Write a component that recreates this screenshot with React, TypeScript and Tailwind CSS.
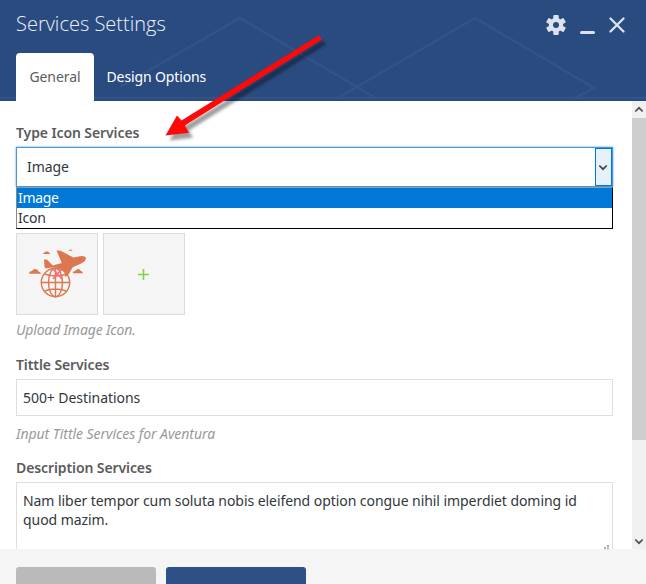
import React from "react";

function HeaderPattern() {
  return (
    <svg className="absolute inset-0" width="646" height="101" fill="none" stroke="#36578b" strokeWidth="2.5">
      <path d="M120 87 240 18 374 97M338 98 475 18 594 88 575 98M0 98H646" strokeOpacity=".7" />
    </svg>
  );
}

function Gear() {
  return (
    <svg width="20" height="20" viewBox="-10 -10 20 20">
      <g fill="#dbe2ee">
        {[0, 60, 120].map((a) => (
          <rect key={a} x="-2.7" y="-10" width="5.4" height="20" rx="1" transform={`rotate(${a})`} />
        ))}
        <circle r="7.2" />
      </g>
      <circle r="3" fill="#2a4b80" />
    </svg>
  );
}

function TravelIcon() {
  return (
    <svg width="80" height="80" viewBox="17 234 80 80">
      <g fill="#dc7850">
        <path d="M44 259.3l3.2.4 5.6 5.8 9-2.6-5.3-12.4 4.2.3 12.6 6.6 6.7-1.2q4.8-.6 6 1.6-.1 3.6-4.8 5.6l-8.5 3.8-4.5 7.8-3.2 2-.7-5.6q-3.5-4-9.8-4-4.5 0-8.7 1.2l-1.3-1.5z" />
        <path d="M29 273.8q0-2.5 3-2.8 2-3.5 5.5-1.2l1 1.6q2.4.4 2.4 2.4z" />
        <path d="M72.5 273.3q.4-2.4 3-2.5 1.8-3 4.5-1l.8 1.3q2.2.2 2.2 2.2z" />
        <path d="M43 254q.3-1.5 2-1.7 1.7-2 3.2-.2 1.6.3 1.8 1.9z" />
        <path d="M68.5 250.8q2-2.8 4.2 0z" />
      </g>
      <g fill="none" stroke="#dc7850" strokeWidth="1.4">
        <circle cx="55.5" cy="282.5" r="14.2" />
        <ellipse cx="55.5" cy="282.5" rx="7" ry="14.2" />
        <path d="M55.5 268v29M41 282.5h29M44.5 274q11 4 22 0M44.5 291q11-4 22 0" />
      </g>
      <path d="M53 269l9 10M62 269l-9 10" stroke="#ff6c79" strokeWidth="1.7" />
    </svg>
  );
}

function Chevron({ className }: { className: string }) {
  return (
    <svg className={className} width="10" height="7" viewBox="0 0 10 7" fill="none">
      <path d="M1.3 1.5 5 5.2 8.7 1.5" stroke="currentColor" strokeWidth="1.7" />
    </svg>
  );
}

function Arrow() {
  return (
    <svg className="absolute left-0 top-0 z-20 pointer-events-none" width="646" height="200">
      <defs>
        <filter id="soft" x="-10%" y="-10%" width="120%" height="130%">
          <feGaussianBlur stdDeviation="1.5" />
        </filter>
      </defs>
      <path d="M319 35.3 181.5 120.5 177 115.5 165.5 135.5 189 132.8 184.8 125.5 322 39.5Z" fill="#000" fillOpacity=".38" filter="url(#soft)" transform="translate(4 5)" />
      <path d="M319 35.3 181.5 120.5 177 115.5 165.5 135.5 189 132.8 184.8 125.5 322 39.5Z" fill="#fe0808" />
    </svg>
  );
}

export default function App() {
  return (
    <div className="relative flex h-[584px] w-[646px] flex-col overflow-hidden bg-white font-['Noto_Sans','Open_Sans',sans-serif] text-[14px] leading-[19px] tracking-[-0.06px] text-[#32373c]">
      <header className="relative flex h-[101px] shrink-0 flex-col justify-between bg-[#2a4b80]">
        <HeaderPattern />
        <div className="relative flex h-[48px] items-center justify-between pl-4 pr-[21px]">
          <h1 className="pb-0.5 font-['Open_Sans',sans-serif] text-[20px] font-light tracking-normal text-[#edf2fa]">Services Settings</h1>
          <div className="flex items-center pt-0.5">
            <Gear />
            <span className="ml-[14px] mt-[14px] h-[3px] w-[15px] rounded-sm bg-[#dbe2ee]" />
            <svg className="ml-[14px]" width="16" height="16" viewBox="0 0 16 16">
              <path d="M1.5 1.5l13 13M14.5 1.5l-13 13" stroke="#dbe2ee" strokeWidth="2.3" strokeLinecap="round" />
            </svg>
          </div>
        </div>
        <nav className="relative flex h-[48px] pl-4">
          <button className="w-[78px] rounded-t bg-white pb-0.5 text-[#5c5c5c]">General</button>
          <button className="ml-[12.5px] pb-0.5 tracking-[-0.12px] text-white">Design Options</button>
        </nav>
      </header>

      <div className="flex h-[448px] shrink-0 overflow-hidden">
        <main className="w-[632px] overflow-hidden pl-4 pr-[19px] pt-[22px]">
          <label className="block h-[19px] font-semibold tracking-[-0.1px] text-[#5b5b5b]">Type Icon Services</label>
          <div className="relative mt-[5px] h-[40px] border border-[#4c96d8] shadow-[0_0_2px_#5b9dd9]">
            <div className="flex h-full items-center justify-between pl-[10px]">
              <span className="pb-0.5">Image</span>
              <span className="flex h-[38px] w-[17px] items-center justify-center border border-[#0078d7] bg-[#e5f1fb] pr-px">
                <Chevron className="text-[#444]" />
              </span>
            </div>
            <div className="absolute -left-px top-[39px] z-10 h-[42px] w-[597px] border border-black border-l-[#888] border-t-[#999] bg-white">
              <div className="h-[20px] bg-[#0078d7] pl-px text-white tracking-[-0.3px]">Image</div>
              <div className="h-[20px] pl-px tracking-[-0.2px]">Icon</div>
            </div>
          </div>
          <div className="mt-[46px] flex gap-[5px]">
            <div className="h-[82px] w-[82px] border border-[#dcdcdc] bg-[#f5f5f5]"><TravelIcon /></div>
            <div className="flex h-[82px] w-[82px] items-center justify-center border border-[#dcdcdc] bg-[#f5f5f5] pr-px">
              <svg width="11" height="11"><path d="M5.5 0v11M0 5.5h11" stroke="#82d151" strokeWidth="1.6" /></svg>
            </div>
          </div>
          <p className="mt-[5px] h-[19px] italic tracking-[-0.18px] text-[#999]">Upload Image Icon.</p>
          <label className="mt-[16px] block h-[19px] font-semibold tracking-[-0.1px] text-[#5b5b5b]">Tittle Services</label>
          <div className="mt-[5px] flex h-[37px] items-center border border-[#dedede] pl-[6px]">500+ Destinations</div>
          <p className="mt-[8px] h-[19px] italic text-[#999]">Input Tittle Services for Aventura</p>
          <label className="mt-[15px] block h-[19px] font-semibold tracking-[-0.1px] text-[#5b5b5b]">Description Services</label>
          <div className="relative mt-[5px] h-[90px] border border-[#dedede] pl-[6px] pt-[8px]">
            <p className="whitespace-nowrap">Nam liber tempor cum soluta nobis eleifend option congue nihil imperdiet doming id<br />quod mazim.</p>
            <svg className="absolute right-[2px] top-[60px]" width="8" height="6" fill="#aaa">
              <path d="M5 2h2v2H5zM2 4h2v2H2zM5 4.5h2v1.5H5z" />
            </svg>
          </div>
        </main>
        <aside className="flex w-[14px] flex-col items-center bg-[#f0f0f0]">
          <div className="flex h-[17px] items-center"><Chevron className="rotate-180 text-[#505050]" /></div>
          <div className="h-[322px] w-full bg-[#cdcdcd]" />
          <Chevron className="mt-[98px] text-[#505050]" />
        </aside>
      </div>

      <footer className="flex flex-1 gap-[10px] bg-[#f5f5f5] pl-4 pt-[18px]">
        <div className="w-[140px] rounded-t-[3px] bg-[#bababa]" />
        <div className="w-[140px] rounded-t-[3px] bg-[#2f5087]" />
      </footer>
      <Arrow />
    </div>
  );
}
